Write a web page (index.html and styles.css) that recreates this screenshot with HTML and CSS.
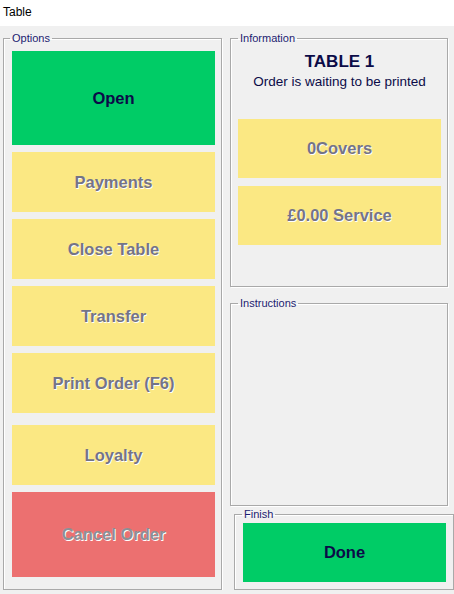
FILE: index.html
```html
<!DOCTYPE html>
<html>
<head>
<meta charset="utf-8">
<link rel="stylesheet" href="styles.css">
</head>
<body>
<div class="titlebar">Table</div>
<div class="main">
  <fieldset class="group options">
    <legend>Options</legend>
    <div class="btn green open">Open</div>
    <div class="btn yellow mid">Payments</div>
    <div class="btn yellow mid">Close Table</div>
    <div class="btn yellow mid">Transfer</div>
    <div class="btn yellow mid">Print Order (F6)</div>
    <div class="btn yellow mid loyalty">Loyalty</div>
    <div class="btn red cancel">Cancel Order</div>
  </fieldset>
  <div class="right">
    <fieldset class="group info">
      <legend>Information</legend>
      <div class="tname">TABLE 1</div>
      <div class="tstatus">Order is waiting to be printed</div>
      <div class="btn yellow small covers">0Covers</div>
      <div class="btn yellow small service">£0.00 Service</div>
    </fieldset>
    <fieldset class="group instr">
      <legend>Instructions</legend>
    </fieldset>
    <fieldset class="group finish">
      <legend>Finish</legend>
      <div class="btn green small">Done</div>
    </fieldset>
  </div>
</div>
</body>
</html>
```

FILE: styles.css
```css
html, body {
  margin: 0;
  padding: 0;
  background: #f0f0f0;
  font-family: "Liberation Sans", Arial, sans-serif;
}
.titlebar {
  height: 26px;
  background: #ffffff;
  font-size: 12px;
  line-height: 25px;
  padding-left: 3px;
  color: #000;
}
.main {
  display: flex;
  padding-left: 3px;
  gap: 8px;
}
.group {
  margin: 0;
  border: 1px solid #a9a9a9;
  box-shadow: inset 1px 1px 0 #ffffff, 1px 1px 0 #ffffff;
  min-width: 0;
}
.group legend {
  font-size: 11px;
  line-height: 13px;
  color: #1c1c70;
  padding: 0 2px;
}
.options legend { margin-left: -2px; }
.info legend { margin-left: 0; }
.instr legend { margin-left: 7px; }
.finish legend { margin-left: -1px; }
.options {
  margin-top: 6px;
  width: 219px;
  box-sizing: border-box;
  padding: 6px 6px 11px 8px;
  display: flex;
  flex-direction: column;
  gap: 7px;
}
.btn {
  display: flex;
  align-items: center;
  justify-content: center;
  font-weight: bold;
  font-size: 16.5px;
  width: 203px;
}
.green {
  background: #00cc66;
  color: #0b0b48;
}
.yellow {
  background: #fbe883;
  color: #747487;
  text-shadow: 1px 1px 0 #ffffff;
}
.red {
  background: #ec7070;
  color: #8c9096;
  text-shadow: 1px 1px 0 #ffffff;
}
.open { height: 94px; }
.mid { height: 60px; }
.loyalty { margin-top: 5px; }
.cancel { height: 85px; }
.right {
  width: 224px;
  display: flex;
  flex-direction: column;
}
.info {
  margin-top: 6px;
  width: 218px;
  box-sizing: border-box;
  height: 255px;
  padding: 0 6px 0 7px;
}
.tname {
  text-align: center;
  font-weight: bold;
  font-size: 17px;
  line-height: 20px;
  color: #0b0b48;
  margin-top: 7px;
}
.tstatus {
  text-align: center;
  font-size: 13.5px;
  line-height: 16px;
  color: #0b0b48;
  margin-top: 2px;
}
.small { height: 59px; }
.covers { margin-top: 29px; }
.service { margin-top: 8px; }
.instr {
  margin-top: 10px;
  width: 218px;
  box-sizing: border-box;
  height: 209px;
  padding: 0;
}
.finish {
  margin-top: 2px;
  margin-left: 4px;
  width: 220px;
  box-sizing: border-box;
  height: 82px;
  padding: 2px 6px 0 8px;
}
```
